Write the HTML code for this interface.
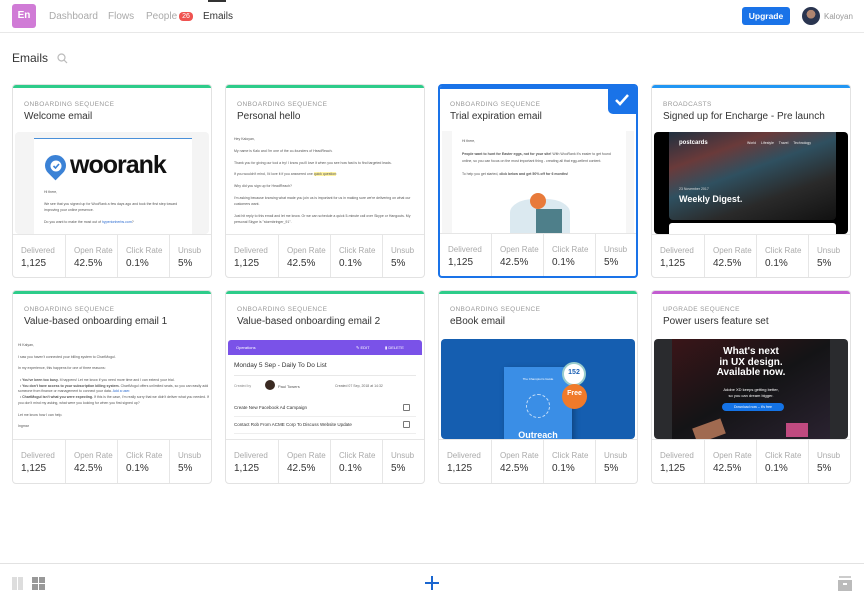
<!DOCTYPE html>
<html><head><meta charset="utf-8"><style>
*{box-sizing:border-box;margin:0;padding:0}
body{width:864px;height:600px;background:#fff;font-family:"Liberation Sans",sans-serif;position:relative;overflow:hidden;color:#333}
.hdr{position:absolute;left:0;top:0;width:864px;height:33px;border-bottom:1px solid #e8e8e8}
.logo{position:absolute;left:12px;top:4px;width:24px;height:24px;background:#d07bd6;border-radius:3px;color:#fff;font-size:10px;font-weight:bold;text-align:center;line-height:24px}
.nav{position:absolute;top:11px;font-size:10px;color:#aaa}
.badge{display:inline-block;background:#ef5350;color:#fff;font-size:7px;border-radius:4px;padding:1px 3px;margin-left:2px;vertical-align:1px}
.card{position:absolute;width:200px;height:194px;border:1px solid #e2e2e2;border-radius:4px;background:#fff;overflow:hidden}
.card .bar{position:absolute;left:0;top:0;right:0;height:3px}
.lab{position:absolute;left:11px;top:16px;font-size:6.5px;color:#999;letter-spacing:.4px}
.tit{position:absolute;left:11px;top:26px;font-size:10px;color:#333;white-space:nowrap}
.pv{position:absolute;left:2px;right:2px;top:47px;height:102px;overflow:hidden}
.st{position:absolute;left:0;right:0;top:149px;height:45px;border-top:1px solid #e6e6e6}
.c{position:absolute;top:0;height:45px;border-right:1px solid #e6e6e6}
.c .l{position:absolute;top:11px;left:8px;font-size:8px;color:#aaa;white-space:nowrap}
.c .v{position:absolute;top:23px;left:8px;font-size:10px;color:#333}
.tiny{font-size:3.5px;color:#555;line-height:6px}
</style></head><body>
<div class="hdr">
<div class="logo">En</div>
<div class="nav" style="left:49px">Dashboard</div>
<div class="nav" style="left:108px">Flows</div>
<div class="nav" style="left:146px">People<span class="badge">26</span></div>
<div class="nav" style="left:203px;color:#333">Emails</div>
<div style="position:absolute;left:208px;top:0;width:18px;height:2px;background:#333"></div>
<div style="position:absolute;left:742px;top:7px;width:48px;height:18px;background:#1a73e8;border-radius:3px;color:#fff;font-size:8.5px;font-weight:bold;text-align:center;line-height:18px">Upgrade</div>
<div style="position:absolute;left:802px;top:7px;width:18px;height:18px;border-radius:50%;background:radial-gradient(circle at 50% 40%,#b08570 0 30%,#2a3550 32%)"></div>
<div style="position:absolute;left:824px;top:12px;font-size:8px;color:#999">Kaloyan</div>
</div>
<div style="position:absolute;left:12px;top:51px;font-size:12px;color:#333">Emails</div>
<svg style="position:absolute;left:57px;top:53px" width="11" height="11" viewBox="0 0 11 11"><circle cx="4.5" cy="4.5" r="3.5" fill="none" stroke="#bbb" stroke-width="1.2"/><path d="M7 7l3 3" stroke="#bbb" stroke-width="1.2"/></svg>

<!-- Row 1 -->
<div class="card" style="left:12px;top:84px"><div class="bar" style="background:#2ecc8a"></div>
<div class="lab">ONBOARDING SEQUENCE</div><div class="tit">Welcome email</div>
<div class="pv" style="background:#f4f4f4;border-radius:4px"><div style="position:absolute;left:19px;top:6px;width:158px;height:100px;background:#fff;border-top:1px solid #4a90d9">
<div style="position:absolute;left:11px;top:16px;width:21px;height:21px;background:#3b82d6;border-radius:50% 50% 50% 0;transform:rotate(-45deg)"></div>
<svg style="position:absolute;left:14px;top:19px" width="16" height="16" viewBox="0 0 16 16"><circle cx="8" cy="8" r="5.5" fill="#fff"/><path d="M5.5 8l2 2 3.5-4" stroke="#3b82d6" stroke-width="1.6" fill="none"/></svg>
<div style="position:absolute;left:36px;top:12px;font-size:25px;font-weight:bold;color:#111;letter-spacing:-1px">woorank</div>
<div class="tiny" style="position:absolute;left:10px;top:50px;width:140px">Hi there,<br><br>We see that you signed up for WooRank a few days ago and took the first step toward improving your online presence.<br><br>Do you want to make the most out of <span style="color:#2a6ad0">hyperionherbs.com</span>?</div></div></div>
<div class="st"><div class="c" style="left:0;width:53px"><div class="l">Delivered</div><div class="v">1,125</div></div><div class="c" style="left:53px;width:52px"><div class="l">Open Rate</div><div class="v">42.5%</div></div><div class="c" style="left:105px;width:52px"><div class="l">Click Rate</div><div class="v">0.1%</div></div><div class="c" style="left:157px;width:43px;border:0"><div class="l">Unsub</div><div class="v">5%</div></div></div></div>

<div class="card" style="left:225px;top:84px"><div class="bar" style="background:#2ecc8a"></div>
<div class="lab">ONBOARDING SEQUENCE</div><div class="tit">Personal hello</div>
<div class="pv"><div class="tiny" style="position:absolute;left:6px;top:5px;width:185px;line-height:5.9px">Hey Kaloyan,<br><br>My name is Kalo and I'm one of the co-founders of HeadReach.<br><br>Thank you for giving our tool a try! I know you'll love it when you see how fast is to find targeted leads.<br><br>If you wouldn't mind, I'd love it if you answered one <span style="background:#fff3a0">quick question</span>:<br><br>Why did you sign up for HeadReach?<br><br>I'm asking because knowing what made you join us is important for us in making sure we're delivering on what our customers want.<br><br>Just hit reply to this email and let me know. Or we can schedule a quick 5-minute call over Skype or Hangouts. My personal Skype is "stormbringer_91".</div></div>
<div class="st"><div class="c" style="left:0;width:53px"><div class="l">Delivered</div><div class="v">1,125</div></div><div class="c" style="left:53px;width:52px"><div class="l">Open Rate</div><div class="v">42.5%</div></div><div class="c" style="left:105px;width:52px"><div class="l">Click Rate</div><div class="v">0.1%</div></div><div class="c" style="left:157px;width:43px;border:0"><div class="l">Unsub</div><div class="v">5%</div></div></div></div>

<div class="card" style="left:438px;top:84px;border:2px solid #1a73e8"><div class="bar" style="background:#1a73e8"></div>
<div class="lab" style="left:10px;top:15px">ONBOARDING SEQUENCE</div><div class="tit" style="left:10px;top:25px">Trial expiration email</div>
<div style="position:absolute;right:0;top:0;width:28px;height:28px;background:#1a73e8;border-radius:0 0 0 5px"><svg width="28" height="28" viewBox="0 0 28 28"><path d="M8 14l4 4 8-9" stroke="#fff" stroke-width="2.5" fill="none"/></svg></div>
<div class="pv" style="left:2px;right:2px;top:45px;background:#f6f6f6"><div style="position:absolute;left:10px;top:0;width:174px;height:102px;background:#fff">
<div class="tiny" style="position:absolute;left:10px;top:7px;width:150px;line-height:6.5px">Hi there,<br><br><b>People want to hunt for Easter eggs, not for your site!</b> With WooRank it's easier to get found online, so you can focus on the most important thing - creating all that egg-cellent content.<br><br>To help you get started, <b>click below and get 50% off for 6 months!</b></div>
<div style="position:absolute;left:58px;top:68px;width:60px;height:34px;background:#dbe9f0;border-radius:40% 40% 0 0"></div>
<div style="position:absolute;left:78px;top:62px;width:16px;height:16px;background:#e87a3a;border-radius:50%"></div>
<div style="position:absolute;left:84px;top:78px;width:26px;height:24px;background:#4e7f8a"></div></div></div>
<div class="st" style="top:147px"><div class="c" style="left:0;width:52px"><div class="l">Delivered</div><div class="v">1,125</div></div><div class="c" style="left:52px;width:52px"><div class="l">Open Rate</div><div class="v">42.5%</div></div><div class="c" style="left:104px;width:52px"><div class="l">Click Rate</div><div class="v">0.1%</div></div><div class="c" style="left:156px;width:43px;border:0"><div class="l">Unsub</div><div class="v">5%</div></div></div></div>

<div class="card" style="left:651px;top:84px"><div class="bar" style="background:#2196f3"></div>
<div class="lab">BROADCASTS</div><div class="tit">Signed up for Encharge - Pre launch</div>
<div class="pv" style="background:#000;border-radius:4px"><div style="position:absolute;left:15px;top:0;width:167px;height:88px;border-radius:0 0 4px 4px;background:linear-gradient(160deg,#203040 0%,#6a3a3a 25%,#2f5060 45%,#2a2a2a 70%,#111 100%)">
<div style="position:absolute;left:10px;top:8px;font-size:6px;color:#fff;font-weight:bold">postcards</div>
<div style="position:absolute;left:78px;top:9px;font-size:3.5px;color:#eee;word-spacing:4px">World Lifestyle Travel Technology</div>
<div style="position:absolute;left:10px;top:55px;font-size:3.5px;color:#ddd">23 November 2017</div>
<div style="position:absolute;left:10px;top:62px;font-size:9px;color:#fff;font-weight:bold">Weekly Digest.</div></div>
<div style="position:absolute;left:15px;top:91px;width:167px;height:12px;background:#fff;border-radius:3px 3px 0 0"></div></div>
<div class="st"><div class="c" style="left:0;width:53px"><div class="l">Delivered</div><div class="v">1,125</div></div><div class="c" style="left:53px;width:52px"><div class="l">Open Rate</div><div class="v">42.5%</div></div><div class="c" style="left:105px;width:52px"><div class="l">Click Rate</div><div class="v">0.1%</div></div><div class="c" style="left:157px;width:43px;border:0"><div class="l">Unsub</div><div class="v">5%</div></div></div></div>

<!-- Row 2 -->
<div class="card" style="left:12px;top:290px"><div class="bar" style="background:#2ecc8a"></div>
<div class="lab" style="top:15px">ONBOARDING SEQUENCE</div><div class="tit" style="top:25px">Value-based onboarding email 1</div>
<div class="pv" style="top:46px"><div class="tiny" style="position:absolute;left:3px;top:6px;width:192px;line-height:5.8px">Hi Kalyan,<br><br>I saw you haven't connected your billing system to ChartMogul.<br><br>In my experience, this happens for one of three reasons:<br><br>&nbsp;&nbsp;&bull; <b>You've been too busy.</b> It happens! Let me know if you need more time and I can extend your trial.<br>&nbsp;&nbsp;&bull; <b>You don't have access to your subscription billing system.</b> ChartMogul offers unlimited seats, so you can easily add someone from finance or management to connect your data. <span style="color:#2a6ad0">Add a user.</span><br>&nbsp;&nbsp;&bull; <b>ChartMogul isn't what you were expecting.</b> If this is the case, I'm really sorry that we didn't deliver what you needed. If you don't mind my asking, what were you looking for when you first signed up?<br><br>Let me know how I can help.<br><br>Ingmar</div></div>
<div class="st" style="top:148px"><div class="c" style="left:0;width:53px"><div class="l">Delivered</div><div class="v">1,125</div></div><div class="c" style="left:53px;width:52px"><div class="l">Open Rate</div><div class="v">42.5%</div></div><div class="c" style="left:105px;width:52px"><div class="l">Click Rate</div><div class="v">0.1%</div></div><div class="c" style="left:157px;width:43px;border:0"><div class="l">Unsub</div><div class="v">5%</div></div></div></div>

<div class="card" style="left:225px;top:290px"><div class="bar" style="background:#2ecc8a"></div>
<div class="lab" style="top:15px">ONBOARDING SEQUENCE</div><div class="tit" style="top:25px">Value-based onboarding email 2</div>
<div class="pv" style="top:46px">
<div style="position:absolute;left:0;top:3px;right:0;height:15px;background:#7a52e8;border-radius:3px 3px 0 0;font-size:4px;color:#fff"><span style="position:absolute;left:8px;top:5px">Operations</span><span style="position:absolute;left:128px;top:5px">✎ EDIT</span><span style="position:absolute;left:157px;top:5px">▮ DELETE</span></div>
<div style="position:absolute;left:6px;top:25px;font-size:6.5px;color:#333">Monday 5 Sep - Daily To Do List</div>
<div style="position:absolute;left:6px;right:6px;top:38px;border-top:1px solid #e8e8e8"></div>
<div style="position:absolute;left:6px;top:47px;font-size:3.5px;color:#888">Created by</div>
<div style="position:absolute;left:37px;top:43px;width:10px;height:10px;border-radius:50%;background:#3a2a22"></div>
<div style="position:absolute;left:50px;top:47px;font-size:4px;color:#555">Paul Towers</div>
<div style="position:absolute;left:107px;top:47px;font-size:3.5px;color:#666">Created 07 Sep, 2018 at 14:32</div>
<div style="position:absolute;left:6px;top:68px;font-size:4.5px;color:#333">Create New Facebook Ad Campaign</div>
<div style="position:absolute;left:175px;top:67px;width:7px;height:7px;border:1px solid #777;border-radius:1px"></div>
<div style="position:absolute;left:6px;right:6px;top:79px;border-top:1px solid #eee"></div>
<div style="position:absolute;left:6px;top:85px;font-size:4.5px;color:#333">Contact Rob From ACME Corp To Discuss Website Update</div>
<div style="position:absolute;left:175px;top:84px;width:7px;height:7px;border:1px solid #777;border-radius:1px"></div>
<div style="position:absolute;left:6px;right:6px;top:96px;border-top:1px solid #eee"></div></div>
<div class="st" style="top:148px"><div class="c" style="left:0;width:53px"><div class="l">Delivered</div><div class="v">1,125</div></div><div class="c" style="left:53px;width:52px"><div class="l">Open Rate</div><div class="v">42.5%</div></div><div class="c" style="left:105px;width:52px"><div class="l">Click Rate</div><div class="v">0.1%</div></div><div class="c" style="left:157px;width:43px;border:0"><div class="l">Unsub</div><div class="v">5%</div></div></div></div>

<div class="card" style="left:438px;top:290px"><div class="bar" style="background:#2ecc8a"></div>
<div class="lab" style="top:15px">ONBOARDING SEQUENCE</div><div class="tit" style="top:25px">eBook email</div>
<div class="pv" style="top:48px;height:100px;background:#155eb0;border-radius:4px">
<div style="position:absolute;left:63px;top:28px;width:68px;height:75px;background:#3a8ee6;box-shadow:2px 2px 6px rgba(0,0,0,.3)">
<div style="position:absolute;left:0;right:0;top:10px;text-align:center;font-size:3px;color:#fff">The Champion's Guide</div>
<div style="position:absolute;left:22px;top:27px;width:24px;height:24px;border-radius:50%;border:1px dashed rgba(255,255,255,.7)"></div>
<div style="position:absolute;left:0;right:0;top:63px;text-align:center;font-size:9px;color:#fff;font-weight:bold">Outreach</div></div>
<div style="position:absolute;left:121px;top:23px;width:24px;height:24px;border-radius:50%;background:#fff;border:2px solid #9cc;text-align:center;font-size:7px;color:#1a5fb4;font-weight:bold;line-height:18px">152</div>
<div style="position:absolute;left:121px;top:45px;width:25px;height:25px;border-radius:50%;background:#f07a2a;text-align:center;font-size:7px;color:#fff;font-weight:bold;line-height:20px">Free</div></div>
<div class="st" style="top:148px"><div class="c" style="left:0;width:53px"><div class="l">Delivered</div><div class="v">1,125</div></div><div class="c" style="left:53px;width:52px"><div class="l">Open Rate</div><div class="v">42.5%</div></div><div class="c" style="left:105px;width:52px"><div class="l">Click Rate</div><div class="v">0.1%</div></div><div class="c" style="left:157px;width:43px;border:0"><div class="l">Unsub</div><div class="v">5%</div></div></div></div>

<div class="card" style="left:651px;top:290px"><div class="bar" style="background:#c25cd0"></div>
<div class="lab" style="top:15px">UPGRADE SEQUENCE</div><div class="tit" style="top:25px">Power users feature set</div>
<div class="pv" style="top:48px;height:100px;background:#2a2b2e;border-radius:4px">
<div style="position:absolute;left:18px;top:0;width:158px;height:100px;background:linear-gradient(150deg,#3a1518 0%,#141416 50%,#2a2230 100%)"></div>
<div style="position:absolute;left:0;right:0;top:8px;text-align:center;font-size:10px;font-weight:bold;color:#fff;line-height:10.5px">What's next<br>in UX design.<br>Available now.</div>
<div style="position:absolute;left:0;right:0;top:48px;text-align:center;font-size:4px;color:#fff;line-height:6px">Adobe XD keeps getting better,<br>so you can dream bigger.</div>
<div style="position:absolute;left:68px;top:64px;width:62px;height:8px;background:#1473e6;border-radius:4px;font-size:3.5px;color:#fff;text-align:center;line-height:8px">Download now – it's free</div>
<div style="position:absolute;left:40px;top:84px;width:30px;height:16px;background:#a06a50;transform:rotate(-20deg)"></div>
<div style="position:absolute;left:132px;top:84px;width:22px;height:14px;background:#c04a80"></div></div>
<div class="st" style="top:148px"><div class="c" style="left:0;width:53px"><div class="l">Delivered</div><div class="v">1,125</div></div><div class="c" style="left:53px;width:52px"><div class="l">Open Rate</div><div class="v">42.5%</div></div><div class="c" style="left:105px;width:52px"><div class="l">Click Rate</div><div class="v">0.1%</div></div><div class="c" style="left:157px;width:43px;border:0"><div class="l">Unsub</div><div class="v">5%</div></div></div></div>

<!-- footer -->
<div style="position:absolute;left:0;top:563px;width:864px;border-top:1px solid #e2e2e2"></div>
<div style="position:absolute;left:12px;top:577px;width:5px;height:13px;background:#ddd"></div>
<div style="position:absolute;left:18px;top:577px;width:5px;height:13px;background:#ddd"></div>
<div style="position:absolute;left:32px;top:577px;width:6px;height:6px;background:#999"></div>
<div style="position:absolute;left:39px;top:577px;width:6px;height:6px;background:#999"></div>
<div style="position:absolute;left:32px;top:584px;width:6px;height:6px;background:#999"></div>
<div style="position:absolute;left:39px;top:584px;width:6px;height:6px;background:#999"></div>
<svg style="position:absolute;left:424px;top:575px" width="16" height="16" viewBox="0 0 16 16"><path d="M8 1v14M1 8h14" stroke="#1a66d0" stroke-width="2"/></svg>
<div style="position:absolute;left:839px;top:576px;width:12px;height:2px;background:#ccc"></div>
<div style="position:absolute;left:838px;top:580px;width:14px;height:11px;background:#bbb"></div>
<div style="position:absolute;left:843px;top:583px;width:4px;height:2px;background:#fff"></div>
</body></html>
